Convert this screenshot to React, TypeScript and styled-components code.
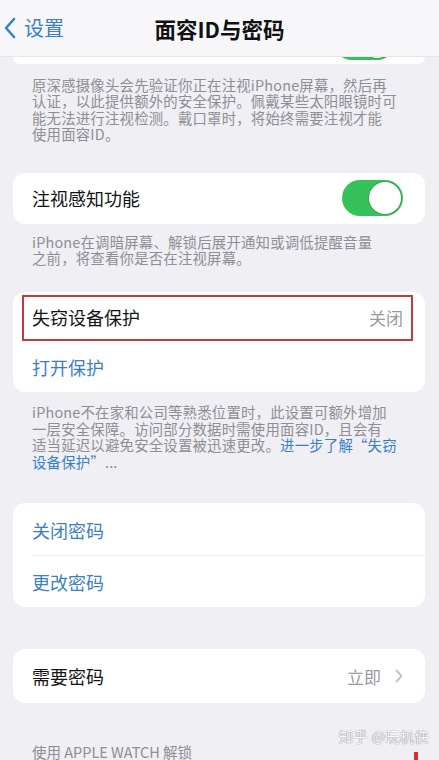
import React, { ReactNode } from 'react';
import styled, { createGlobalStyle } from 'styled-components';

const GlobalStyle = createGlobalStyle`
  html, body {
    margin: 0;
    padding: 0;
    background: #efeff4;
  }
  body {
    font-family: "Noto Sans CJK SC", "Noto Sans", sans-serif;
    -webkit-font-smoothing: antialiased;
  }
`;

const Screen = styled.div`
  position: relative;
  width: 439px;
  height: 760px;
  overflow: hidden;
  background: #efeff4;
`;

const NavBar = styled.div`
  height: 57px;
  display: flex;
  align-items: center;
  position: relative;
  background: #f7f7f9;
  border-bottom: 1px solid #e6e6ea;
  box-sizing: border-box;
`;

const BackButton = styled.div`
  display: flex;
  align-items: center;
  gap: 8px;
  padding-left: 4px;
  color: #3b7fc9;
  font-size: 20px;
  line-height: 1;
`;

const Title = styled.div`
  position: absolute;
  left: 0;
  right: 0;
  text-align: center;
  font-size: 21.5px;
  font-weight: 600;
  color: #111;
  pointer-events: none;
`;

const Content = styled.div`
  padding: 0 14px 0 13px;
`;

const ClippedCard = styled.div`
  height: 7px;
  background: #fff;
  border-radius: 0 0 12px 12px;
  overflow: hidden;
  display: flex;
  justify-content: flex-end;
  align-items: flex-end;
  padding-right: 30px;
`;

const Card = styled.div<{ $mt: number }>`
  margin-top: ${(p) => p.$mt}px;
  background: #fff;
  border-radius: 12px;
  overflow: hidden;
`;

const Row = styled.div<{ $h?: number; $divider?: boolean }>`
  height: ${(p) => p.$h ?? 51}px;
  display: flex;
  align-items: center;
  padding: 0 22px 0 19px;
  position: relative;
  box-sizing: border-box;
  ${(p) =>
    p.$divider &&
    `&::after {
      content: '';
      position: absolute;
      left: 19px;
      right: 0;
      bottom: 0;
      height: 1px;
      background: #ececef;
    }`}
`;

const Label = styled.span<{ $blue?: boolean }>`
  flex: 1;
  font-size: 18px;
  color: ${(p) => (p.$blue ? '#3b7fc9' : '#141414')};
`;

const Value = styled.span`
  font-size: 17px;
  color: #9a9a9f;
  display: flex;
  align-items: center;
  gap: 14px;
`;

const Highlight = styled.div`
  position: absolute;
  left: 9px;
  right: 12px;
  top: 3px;
  bottom: 1px;
  border: 2px solid #c63a3f;
  pointer-events: none;
`;

const Toggle = styled.div<{ $peek?: boolean }>`
  width: 61px;
  height: 36px;
  border-radius: 18px;
  background: #35c25a;
  position: relative;
  flex-shrink: 0;
  margin-bottom: ${(p) => (p.$peek ? '4px' : '0')};
  &::after {
    content: '';
    position: absolute;
    right: 2px;
    top: 2px;
    width: 32px;
    height: 32px;
    border-radius: 50%;
    background: #fff;
    box-shadow: 0 0 0 1px rgba(60, 110, 70, 0.35);
  }
`;

const Note = styled.div<{ $mt: number }>`
  margin-top: ${(p) => p.$mt}px;
  padding-left: 19px;
  font-size: 14.4px;
  line-height: 16.4px;
  color: #8e8e93;
  letter-spacing: 0.2px;
`;

const NoteLine = styled.div`
  white-space: nowrap;
`;

const Link = styled.span`
  color: #3b7fc9;
`;

const Footer = styled.div`
  margin-top: 38px;
  padding-left: 19px;
  font-size: 14.5px;
  color: #8e8e93;
`;

const Watermark = styled.div`
  position: absolute;
  right: 10px;
  bottom: 14px;
  font-size: 14px;
  color: #fafafa;
  text-shadow: 0 0 1px #8a8a8a, 0 0 1px #8a8a8a;
  letter-spacing: 0.5px;
`;

const RedMark = styled.div`
  position: absolute;
  left: 414px;
  top: 752px;
  width: 4px;
  height: 8px;
  background: #d3303a;
`;

const Chevron = ({ size, color }: { size: number; color: string }) => (
  <svg width={size * 0.55} height={size} viewBox="0 0 12 22" fill="none">
    <path d="M10 2 L2 11 L10 20" stroke={color} strokeWidth="2.6" strokeLinecap="round" strokeLinejoin="round" />
  </svg>
);

const SmallChevron = () => (
  <svg width="8" height="14" viewBox="0 0 8 14" fill="none">
    <path d="M1.5 1.5 L6.5 7 L1.5 12.5" stroke="#c4c4c8" strokeWidth="2" strokeLinecap="round" strokeLinejoin="round" />
  </svg>
);

const NoteBlock = ({ mt, lines }: { mt: number; lines: ReactNode[] }) => (
  <Note $mt={mt}>
    {lines.map((line, i) => (
      <NoteLine key={i}>{line}</NoteLine>
    ))}
  </Note>
);

export default function App() {
  return (
    <Screen>
      <GlobalStyle />
      <NavBar>
        <BackButton>
          <Chevron size={22} color="#3b7fc9" />
          <span>设置</span>
        </BackButton>
        <Title>面容ID与密码</Title>
      </NavBar>
      <Content>
        <ClippedCard>
          <Toggle $peek />
        </ClippedCard>
        <NoteBlock
          mt={13}
          lines={[
            '原深感摄像头会先验证你正在注视iPhone屏幕，然后再',
            '认证，以此提供额外的安全保护。佩戴某些太阳眼镜时可',
            '能无法进行注视检测。戴口罩时，将始终需要注视才能',
            '使用面容ID。',
          ]}
        />
        <Card $mt={30}>
          <Row>
            <Label>注视感知功能</Label>
            <Toggle />
          </Row>
        </Card>
        <NoteBlock
          mt={10}
          lines={['iPhone在调暗屏幕、解锁后展开通知或调低提醒音量', '之前，将查看你是否在注视屏幕。']}
        />
        <Card $mt={26}>
          <Row $h={50}>
            <Label>失窃设备保护</Label>
            <Value>关闭</Value>
            <Highlight />
          </Row>
          <Row $h={50}>
            <Label $blue>打开保护</Label>
          </Row>
        </Card>
        <NoteBlock
          mt={12}
          lines={[
            'iPhone不在家和公司等熟悉位置时，此设置可额外增加',
            '一层安全保障。访问部分数据时需使用面容ID，且会有',
            <>
              适当延迟以避免安全设置被迅速更改。<Link>进一步了解“失窃</Link>
            </>,
            <>
              <Link>设备保护”</Link>...
            </>,
          ]}
        />
        <Card $mt={33}>
          <Row $h={53} $divider>
            <Label $blue>关闭密码</Label>
          </Row>
          <Row $h={51}>
            <Label $blue>更改密码</Label>
          </Row>
        </Card>
        <Card $mt={42}>
          <Row $h={54}>
            <Label>需要密码</Label>
            <Value>
              立即
              <SmallChevron />
            </Value>
          </Row>
        </Card>
        <Footer>使用 APPLE WATCH 解锁</Footer>
      </Content>
      <Watermark>知乎 @玩机侠</Watermark>
      <RedMark />
    </Screen>
  );
}
